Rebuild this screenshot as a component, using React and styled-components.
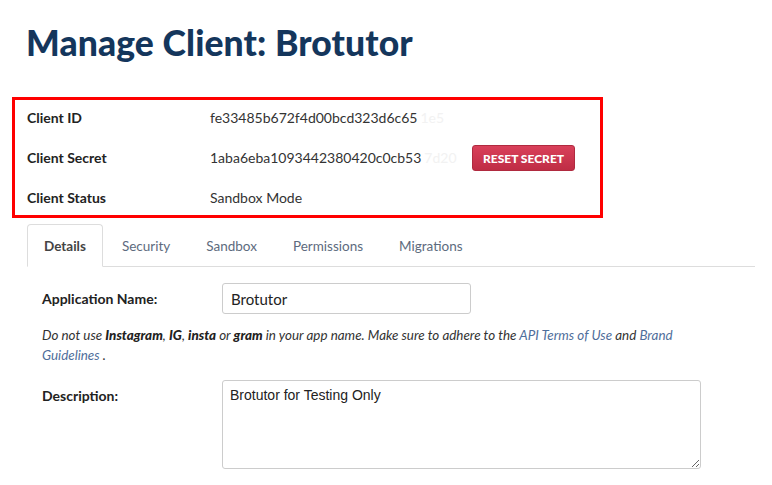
import styled, { createGlobalStyle } from "styled-components";

const GlobalStyle = createGlobalStyle`
  body {
    margin: 0;
    background: #fff;
    font-family: "Lato", "Open Sans", sans-serif;
    color: #333;
  }
`;

const tabs = ["Details", "Security", "Sandbox", "Permissions", "Migrations"];

function App() {
  return (
    <Page>
      <GlobalStyle />
      <Title>Manage Client: Brotutor</Title>

      <InfoBox>
        <InfoRow>
          <InfoLabel>Client ID</InfoLabel>
          <InfoValue>
            fe33485b672f4d00bcd323d6c65<Hidden>1e5</Hidden>
          </InfoValue>
        </InfoRow>
        <InfoRow>
          <InfoLabel>Client Secret</InfoLabel>
          <InfoValue>
            1aba6eba1093442380420c0cb53<Hidden>7d20</Hidden>
          </InfoValue>
          <ResetButton>Reset Secret</ResetButton>
        </InfoRow>
        <InfoRow last>
          <InfoLabel>Client Status</InfoLabel>
          <InfoValue>Sandbox Mode</InfoValue>
        </InfoRow>
      </InfoBox>

      <TabList>
        {tabs.map((t, i) => (
          <Tab key={t} active={i === 0}>{t}</Tab>
        ))}
      </TabList>

      <Form>
        <FieldRow>
          <FieldLabel>Application Name:</FieldLabel>
          <TextInput defaultValue="Brotutor" />
        </FieldRow>
        <Help>
          Do not use <b>Instagram</b>, <b>IG</b>, <b>insta</b> or <b>gram</b> in your app name. Make sure to adhere to the{" "}
          <HelpLink>API Terms of Use</HelpLink> and <HelpLink>Brand Guidelines</HelpLink> .
        </Help>
        <FieldRow top>
          <FieldLabel top>Description:</FieldLabel>
          <TextArea defaultValue="Brotutor for Testing Only" />
        </FieldRow>
      </Form>
    </Page>
  );
}

export default App;

const Page = styled.div`
  padding: 22px 0 0 12px;
  width: 760px;
  box-sizing: border-box;
`;

const Title = styled.h1`
  margin: 0 0 33px 14px;
  font-size: 35.5px;
  line-height: 42px;
  font-weight: 900;
  color: #14365c;
  letter-spacing: 0.1px;
`;

const InfoBox = styled.div`
  width: 591px;
  box-sizing: border-box;
  border: 3px solid #ff0000;
  padding: 0 12px;
`;

const InfoRow = styled.div`
  display: flex;
  align-items: center;
  height: ${(p) => (p.last ? 35 : 40)}px;
  padding-bottom: ${(p) => (p.last ? 1 : 6)}px;
  box-sizing: border-box;
  font-size: 14px;
`;

const InfoLabel = styled.div`
  width: 183px;
  font-weight: 700;
  color: #222;
`;

const InfoValue = styled.div`
  width: 262px;
  color: #333;
  white-space: nowrap;
`;

const Hidden = styled.span`
  color: #f2f2f2;
  margin-left: 3px;
`;

const ResetButton = styled.button`
  height: 26px;
  width: 103px;
  margin-top: 2px;
  padding: 0;
  border: 1px solid #b02a3f;
  border-radius: 3px;
  background: linear-gradient(#d9405a, #bf2d45);
  color: #fff;
  font-family: "Lato", sans-serif;
  font-weight: 900;
  font-size: 12px;
  text-transform: uppercase;
`;

const TabList = styled.div`
  display: flex;
  margin: 6px 5px 0 15px;
  border-bottom: 1px solid #ddd;
  height: 42px;
`;

const Tab = styled.div`
  display: flex;
  align-items: center;
  padding: 0 16px;
  margin-right: 2px;
  margin-bottom: -1px;
  font-size: 13.5px;
  color: ${(p) => (p.active ? "#444" : "#5d6b7e")};
  font-weight: ${(p) => (p.active ? 700 : 400)};
  border: 1px solid ${(p) => (p.active ? "#ddd" : "transparent")};
  border-bottom-color: ${(p) => (p.active ? "#fff" : "transparent")};
  border-radius: 4px 4px 0 0;
  background: ${(p) => (p.active ? "#fff" : "transparent")};
`;

const Form = styled.div`
  padding: 16px 0 0 30px;
`;

const FieldRow = styled.div`
  display: flex;
  align-items: ${(p) => (p.top ? "flex-start" : "center")};
`;

const FieldLabel = styled.div`
  width: 180px;
  font-size: 14px;
  font-weight: 700;
  color: #222;
  padding-top: ${(p) => (p.top ? "7px" : "0")};
`;

const TextInput = styled.input`
  width: 249px;
  height: 31px;
  box-sizing: border-box;
  border: 1px solid #ccc;
  border-radius: 3px;
  padding: 0 8px;
  font-family: "Lato", sans-serif;
  font-size: 15px;
  color: #222;
  outline: none;
`;

const Help = styled.p`
  width: 652px;
  margin: 11px 0 15px;
  font-size: 13.4px;
  line-height: 20px;
  font-style: italic;
  color: #333;

  b {
    font-weight: 900;
    color: #222;
  }
`;

const HelpLink = styled.span`
  color: #4f6e9b;
`;

const TextArea = styled.textarea`
  width: 479px;
  height: 89px;
  box-sizing: border-box;
  border: 1px solid #ccc;
  border-radius: 3px;
  padding: 6px 7px;
  font-family: "Liberation Sans", Arial, sans-serif;
  font-size: 14px;
  color: #222;
  resize: vertical;
  outline: none;
`;
